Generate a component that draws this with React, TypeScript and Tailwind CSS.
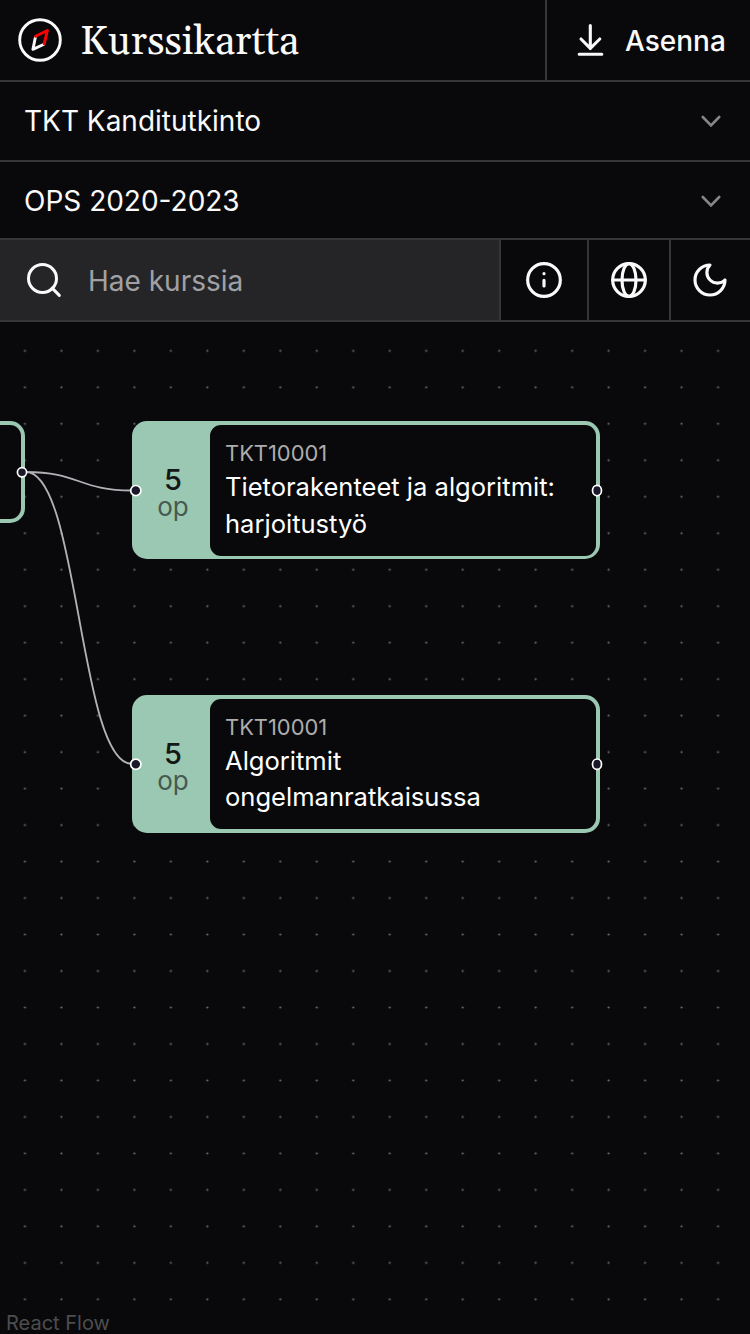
import React from "react";

type Course = { code: string; lines: string[]; place: string };

const courses: Course[] = [
  { code: "TKT10001", lines: ["Tietorakenteet ja algoritmit:", "harjoitustyö"], place: "top-[99px]" },
  { code: "TKT10001", lines: ["Algoritmit", "ongelmanratkaisussa"], place: "top-[372.8px]" },
];

function Stroke({ className, width = 2, children }: { className: string; width?: number; children: React.ReactNode }) {
  return (
    <svg viewBox="0 0 24 24" fill="none" stroke="currentColor" strokeWidth={width} strokeLinecap="round" strokeLinejoin="round" className={className}>
      {children}
    </svg>
  );
}

function SelectRow({ label, className }: { label: string; className: string }) {
  return (
    <div className={`flex shrink-0 items-center justify-between border-b-2 border-[#363638] pl-6 pr-[29.5px] ${className}`}>
      <span className="text-[28px] leading-[34px]">{label}</span>
      <svg viewBox="0 0 20 12" className="h-3 w-5 text-[#858587]" fill="none" stroke="currentColor" strokeWidth="2.6" strokeLinecap="round">
        <path d="M1.8 2 10 10.4l8.2-8.4" />
      </svg>
    </div>
  );
}

function CourseNode({ course }: { course: Course }) {
  return (
    <div className={`absolute left-[132px] flex h-[138.4px] w-[468px] rounded-[15px] bg-[#9ac8b2] py-[3.8px] pr-[3.8px] ${course.place}`}>
      <div className="flex w-[78px] flex-col items-center pl-[4px] pt-[40.1px] text-[#141716]">
        <span className="text-[29px] font-medium leading-[29px]">5</span>
        <span className="text-[26px] leading-[26px] text-[#465a50]">op</span>
      </div>
      <div className="flex-1 rounded-[11px] bg-[#09090b] pl-[15px] pt-[14.3px]">
        <div className="pb-[2px] text-[21.9px] leading-[28px] text-[#adadad]">{course.code}</div>
        {course.lines.map((line) => (
          <div key={line} className="whitespace-nowrap text-[25.55px] leading-[36.5px] text-white">{line}</div>
        ))}
      </div>
    </div>
  );
}

export default function App() {
  return (
    <div className="flex h-[1334px] w-[750px] flex-col overflow-hidden bg-[#09090b] font-['Inter',sans-serif] text-[#fafafa]">
      <header className="flex h-[82px] shrink-0 border-b-2 border-[#363638]">
        <div className="flex flex-1 items-center pl-[18px]">
          <svg viewBox="0 0 44 44" className="h-11 w-11" fill="none" strokeWidth="2.9" strokeLinejoin="round" strokeLinecap="round">
            <circle cx="22" cy="22" r="20.3" stroke="#fafafa" />
            <path d="M17.3 19.8 14.9 31.4l10.6-4.9" stroke="#fafafa" />
            <path d="M17.6 18.3 29.4 12.5l-3.2 13.3" stroke="#ff0000" />
          </svg>
          <h1 className="ml-[18px] pt-[5px] font-['Georgia','Gelasio','Liberation_Serif',serif] text-[40px] leading-[48px]">Kurssikartta</h1>
        </div>
        <button className="flex w-[205px] items-center border-l-2 border-[#363638] pl-[26px] text-[28px] font-medium">
          <svg viewBox="0 0 34 34" className="h-[34px] w-[34px]" fill="none" stroke="currentColor" strokeWidth="3.1" strokeLinecap="round" strokeLinejoin="round">
            <path d="M17.3 2.6v23M8 16l9.3 9.3L26.8 16M6.2 31.3h22.6" />
          </svg>
          <span className="ml-[18px] pt-[2px]">Asenna</span>
        </button>
      </header>
      <SelectRow label="TKT Kanditutkinto" className="h-[80px]" />
      <SelectRow label="OPS 2020-2023" className="h-[78px] pt-[1px]" />
      <div className="flex h-[82px] shrink-0 border-b-2 border-[#363638]">
        <div className="flex flex-1 items-center bg-[#252527] pl-6">
          <Stroke className="h-10 w-10" width={1.8}>
            <circle cx="11.1" cy="11.1" r="8.4" />
            <path d="m21.2 21.2-4.3-4.3" />
          </Stroke>
          <span className="ml-6 pt-[2px] text-[28px] text-[#a1a1a5]">Hae kurssia</span>
        </div>
        <button className="flex w-[88px] items-center justify-center border-l-2 border-[#363638]">
          <Stroke className="h-10 w-10" width={1.9}>
            <circle cx="12" cy="12" r="9.8" /><path d="M12 15.6v-3.4M12 8.2h.01" />
          </Stroke>
        </button>
        <button className="flex w-[82px] items-center justify-center border-l-2 border-[#363638]">
          <Stroke className="h-10 w-10" width={1.9}>
            <circle cx="12" cy="12" r="9.8" /><ellipse cx="12" cy="12" rx="4.2" ry="9.8" /><path d="M2.2 12h19.6" />
          </Stroke>
        </button>
        <button className="flex w-[81px] items-center justify-center border-l-2 border-[#363638] pr-[1px]">
          <Stroke className="h-10 w-10" width={1.9}>
            <path d="M12 3a6 6 0 0 0 9 9 9 9 0 1 1-9-9Z" />
          </Stroke>
        </button>
      </div>
      <main className="relative flex-1 overflow-hidden">
        <svg className="absolute inset-0 h-full w-full">
          <defs>
            <pattern id="dots" x="6.7" y="10.6" width="36.48" height="36.48" patternUnits="userSpaceOnUse">
              <circle cx="18.24" cy="18.24" r="1.1" fill="#6c6c70" />
            </pattern>
          </defs>
          <rect width="750" height="1012" fill="url(#dots)" />
          <path d="M26 150C79 150 79 168.5 132 168.5M26 150C79 150 79 442 132 442" fill="none" stroke="#b1b1b7" strokeWidth="1.8" />
        </svg>
        <div className="absolute -left-[40px] top-[99px] h-[102px] w-[65px] rounded-[15px] bg-[#9ac8b2] p-[3.8px]">
          <div className="h-full rounded-[11px] bg-[#09090b]" />
        </div>
        {courses.map((course) => (
          <CourseNode key={course.place} course={course} />
        ))}
        <svg className="absolute inset-0 h-full w-full" fill="#1a192b" stroke="#ffffff" strokeWidth="1.7">
          <circle cx="22" cy="150.3" r="4.6" />
          <circle cx="135.8" cy="168.6" r="5.1" />
          <circle cx="135.8" cy="442.2" r="5.1" />
          <ellipse cx="597" cy="168.6" rx="4.5" ry="5.2" />
          <ellipse cx="597" cy="442.2" rx="4.5" ry="5.2" />
        </svg>
        <span className="absolute -bottom-px left-[6px] text-[20px] leading-[23px] text-[#4d4d4f]">React Flow</span>
      </main>
    </div>
  );
}
